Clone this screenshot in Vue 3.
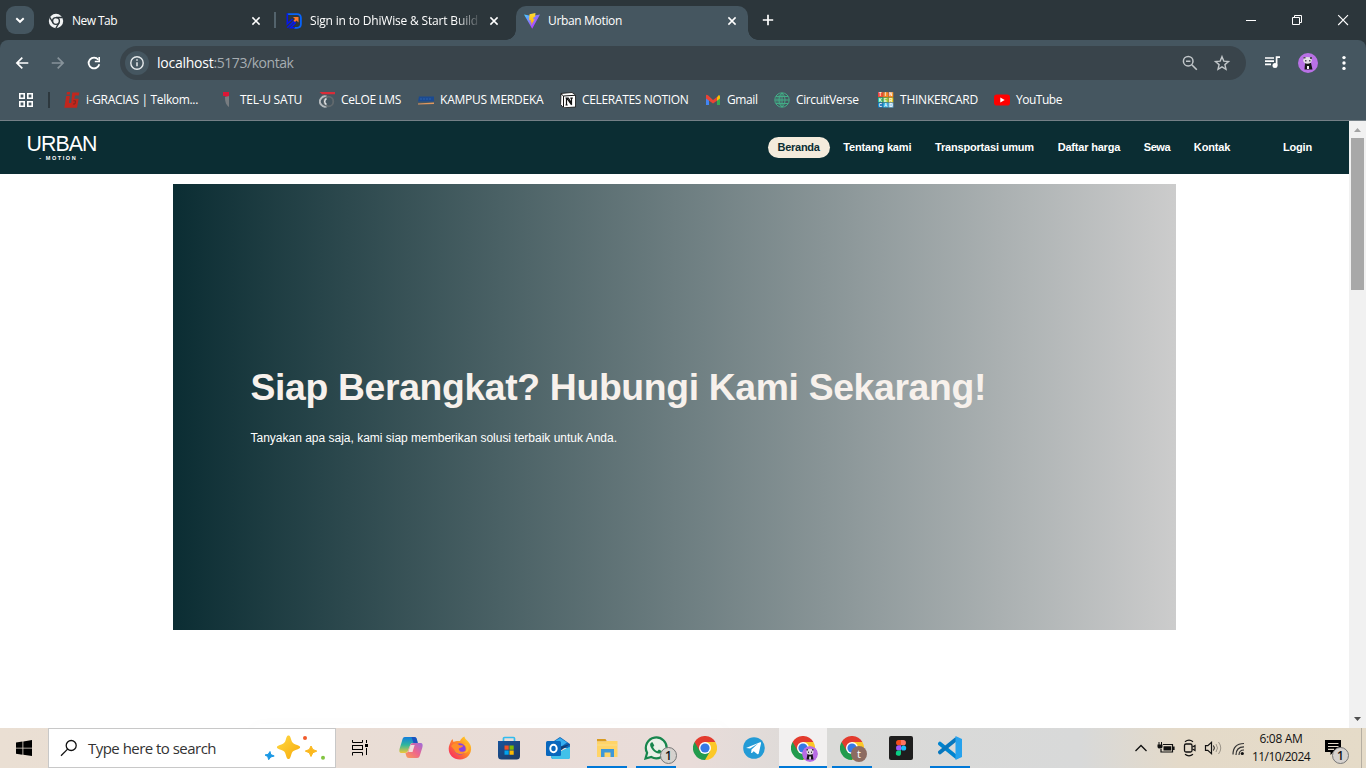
<script setup>
const fit = (el, binding) => {
  el.style.letterSpacing = '0px'
  const n = el.textContent.trim().length
  const w = el.getBoundingClientRect().width
  el.style.letterSpacing = (binding.value - w) / n + 'px'
}
const vFit = { mounted: fit }

const tabs = [
  { id: 'chrome', title: 'New Tab', w: 45 },
  { id: 'dhi', title: 'Sign in to DhiWise & Start Build', w: 168 },
  { id: 'vite', title: 'Urban Motion', w: 74, active: true },
]
const bookmarks = [
  { id: 'ig', text: 'i-GRACIAS | Telkom...', w: 112, slot: 154 },
  { id: 'tel', text: 'TEL-U SATU', w: 62, slot: 101 },
  { id: 'celoe', text: 'CeLOE LMS', w: 60, slot: 99 },
  { id: 'kampus', text: 'KAMPUS MERDEKA', w: 103.5, slot: 142 },
  { id: 'notion', text: 'CELERATES NOTION', w: 106.5, slot: 145 },
  { id: 'gmail', text: 'Gmail', w: 30.5, slot: 69 },
  { id: 'cv', text: 'CircuitVerse', w: 62.5, slot: 104 },
  { id: 'tinker', text: 'THINKERCARD', w: 78, slot: 116 },
  { id: 'yt', text: 'YouTube', w: 46, slot: 90 },
]
const links = [
  ['Beranda', 42], ['Tentang kami', 68], ['Transportasi umum', 99],
  ['Daftar harga', 62.5], ['Sewa', 26.3], ['Kontak', 36.5],
]
const apps = ['copilot', 'firefox', 'store', 'outlook', 'files', 'whatsapp', 'chrome', 'telegram', 'chromeA', 'chromeT', 'figma', 'code']
const running = ['files', 'whatsapp', 'chromeA', 'chromeT', 'code']
const tinker = ['#f04b37', '#f58220', '#f58220', '#22b573', '#8cc63f', '#e0c318', '#1479bf', '#29abe2', '#7ac5ee']
const tinkerLetters = 'TINKERCAD'.split('')
</script>

<template>
  <div class="screen">
    <header class="strip">
      <div class="tabsearch">
        <svg width="28" height="28" viewBox="0 0 28 28"><path d="M10.3 12.2 14 15.8l3.7-3.6" fill="none" stroke="#fff" stroke-width="1.9" /></svg>
      </div>
      <div v-for="t in tabs" :key="t.id" class="tab" :class="[{ active: t.active }, t.id]">
        <svg v-if="t.id === 'chrome'" class="fav" viewBox="0 0 16 16">
          <circle cx="8" cy="8" r="7.2" fill="#f1f3f4" />
          <circle cx="8" cy="8" r="3.4" fill="#f1f3f4" stroke="#2c363b" stroke-width="1.4" />
          <path d="M8 4.5h6.6M5 9.8 1.8 4.3M11 9.8l-3.2 5.5" stroke="#2c363b" stroke-width="1.3" />
        </svg>
        <svg v-else-if="t.id === 'dhi'" class="fav" viewBox="0 0 16 16">
          <path d="M1.500 1.200H11q3.900 0 3.900 3.900v6q0 3.700-3.900 3.700H8" fill="none" stroke="#0763fb" stroke-width="1.800" />
          <path d="M1.300.3v10.500L6.500 6M1.300 14.700 7.800 8.400l1.500 1.500-4.800 4.900H9" fill="none" stroke="#0718e8" stroke-width="1.600" />
          <path d="M7 4h5.500v5.500L10.500 7.600 9 9 7.500 7.500 9 6z" fill="#ff7629" />
        </svg>
        <svg v-else class="fav" viewBox="0 0 16 16">
          <defs>
            <linearGradient id="vg" x1="0" y1="0" x2="1" y2="1"><stop stop-color="#41d1ff" /><stop offset="0.8" stop-color="#bd34fe" /></linearGradient>
            <linearGradient id="vy" x1="0" y1="0" x2="0" y2="1"><stop stop-color="#ffdd35" /><stop offset="1" stop-color="#ffa800" /></linearGradient>
          </defs>
          <path d="M0 1.5 8 3l8-1.5L8.2 15.7z" fill="url(#vg)" />
          <path d="m11.5.1-6 1.2-.4 6 1.8-.4-.5 2.5 1.3-.4-.6 3.4 3.7-6.3-1.8.3.8-2.5 1.3-.2z" fill="url(#vy)" />
        </svg>
        <span class="title"><span v-fit="t.w" class="fit">{{ t.title }}</span></span>
        <svg class="close" viewBox="0 0 16 16"><path d="m4.4 4.400 7.200 7.200m0-7.200-7.200 7.200" stroke="#fff" stroke-width="1.500" /></svg>
      </div>
      <svg class="plus" width="16" height="16" viewBox="0 0 16 16"><path d="M8 2.800v10.400M2.800 8h10.400" stroke="#fff" stroke-width="1.700" /></svg>
      <div class="winctl">
        <svg viewBox="0 0 46 40"><path d="M18 20.500h10" stroke="#fff" /></svg>
        <svg viewBox="0 0 46 40"><path d="M18.500 17.500h7v7h-7zM20.500 17.500v-2h7v7h-2" fill="none" stroke="#fff" /></svg>
        <svg viewBox="0 0 46 40"><path d="m18.200 15.200 9.800 9.800m0-9.800L18.200 25" stroke="#fff" stroke-width="1.100" /></svg>
      </div>
    </header>

    <div class="toolbar">
      <div class="navbtns">
        <svg viewBox="0 0 36 40"><path d="M24.300 23H13m5.300-5.400L12.900 23l5.400 5.400" fill="none" stroke="#fff" stroke-width="1.700" /></svg>
        <svg viewBox="0 0 36 40"><path d="M11.700 23H23m-5.300-5.400 5.400 5.400-5.400 5.400" fill="none" stroke="#87939a" stroke-width="1.700" /></svg>
        <svg viewBox="0 0 36 40"><path d="M22.300 19.700A5.400 5.400 0 1 0 23.300 24.300" fill="none" stroke="#fff" stroke-width="1.800" /><path d="M24 17v5.200h-5.200v-1.500h3.600V17z" fill="#fff" /></svg>
      </div>
      <div class="omni">
        <div class="info">
          <svg width="24" height="24" viewBox="0 0 24 24"><circle cx="12" cy="12" r="6.200" fill="none" stroke="#e6eaec" stroke-width="1.400" /><path d="M12 11.200v4M12 8.300v1.500" stroke="#e6eaec" stroke-width="1.500" /></svg>
        </div>
        <span v-fit="56.5" class="fit host">localhost</span><span v-fit="80" class="fit path">:5173/kontak</span>
        <svg class="oi first" viewBox="0 0 18 18"><circle cx="7.200" cy="7.200" r="4.800" fill="none" stroke="#c1c6c9" stroke-width="1.500" /><path d="m10.800 10.800 5 5M5 7.200h4.400" stroke="#c1c6c9" stroke-width="1.600" /></svg>
        <svg class="oi" viewBox="0 0 18 18"><path d="m9 2.700 1.800 4.400 4.700.4-3.600 3.100 1.100 4.700L9 12.800l-4 2.500 1.100-4.700-3.600-3.100 4.700-.4z" fill="none" stroke="#c1c6c9" stroke-width="1.400" /></svg>
      </div>
      <svg class="tb music" viewBox="1 0 36 40"><path d="M12 18h9M12 21.200h9M12 24.400h6" stroke="#fff" stroke-width="1.700" /><circle cx="22" cy="25.500" r="2.500" fill="#fff" /><path d="M23.600 25.500v-8.300h3.400" fill="none" stroke="#fff" stroke-width="1.700" /></svg>
      <svg class="tb" viewBox="0 0 36 40"><circle cx="18" cy="23" r="10" fill="#b971e6" /><g transform="translate(18 23)"><path d="M-3 0h6l1.500 6.500h-8z" fill="#161616" /><ellipse cx="-.5" cy="-2.700" rx="4.200" ry="3.400" fill="#e3dfe5" /><path d="M-4.500-6h2v1.500h-2zM2-6h2v2H2zM-3-3h1.500v1.500H-3zM1-3h1.500v1.500H1z" fill="#55505a" /><path d="M-1 3h2v3h-2z" fill="#f2eef4" /></g></svg>
      <svg class="tb" viewBox="0 0 36 40"><circle cx="18" cy="17.600" r="1.700" fill="#fff" /><circle cx="18" cy="23" r="1.700" fill="#fff" /><circle cx="18" cy="28.400" r="1.700" fill="#fff" /></svg>
    </div>

    <div class="bookmarks">
      <svg class="grid" width="16" height="16" viewBox="0 0 16 16"><path d="M1.800 1.800h4.400v4.400H1.800zM9.800 1.800h4.400v4.400H9.800zM1.800 9.800h4.400v4.400H1.800zM9.800 9.800h4.400v4.400H9.800z" fill="none" stroke="#fff" stroke-width="1.600" /></svg>
      <div class="bar"></div>
      <div v-for="b in bookmarks" :key="b.id" class="bm" :style="{ width: b.slot + 'px' }">
        <svg v-if="b.id === 'ig'" viewBox="0 0 16 16"><path d="M3 0h3.200l-.5 2.600H2.500zM2.200 4h3.600L4.900 11h2.300L8.300.5h7L14.800 3.500H11l-.7 3.200h4.400L13 15.700H.3L1 11.500z" fill="#c2261d" /><path d="M9.300 8.800h2.200l-.5 3.200H9" fill="none" stroke="#7e2521" /></svg>
        <svg v-else-if="b.id === 'tel'" viewBox="0 0 16 16"><path d="M5 0h6v4.500L9 6 7 4 5 4z" fill="#dc1535" /><path d="m7 5 4-1v11c-3-2-4-5-4-10z" fill="#777c80" /></svg>
        <svg v-else-if="b.id === 'celoe'" viewBox="0 0 16 16"><path d="M.5 0H16v2.300H3z" fill="#d92c38" /><path d="M8.500 5.200a5 5 0 1 0 0 8.600" fill="none" stroke="#b6bbbe" stroke-width="2" /><circle cx="9.500" cy="9.500" r="4.800" fill="none" stroke="#61696d" stroke-width="1.800" /><path d="M7.500 6.500a3.400 3.400 0 0 0 0 6" fill="none" stroke="#e2e4e5" stroke-width="1.500" /></svg>
        <svg v-else-if="b.id === 'kampus'" viewBox="0 0 16 16"><path d="M1 4.500h15v5H0z" fill="#1b4a91" /><path d="M2 7h12" stroke="#2d62ab" stroke-dasharray="2 1" /><path d="m0 11.500 16-1V12L0 12.500z" fill="#e0975f" /></svg>
        <svg v-else-if="b.id === 'notion'" viewBox="0 0 16 16"><path d="M1 1.500 12 .5l3.500 2.500v12l-12 .8L.6 12.500z" fill="#fff" stroke="#111" stroke-width=".8" /><path d="M3.500 4 15 3.300M3.500 4v11M1 1.800 3.500 4" stroke="#111" fill="none" /><path d="M5.500 6h2.800l3.200 5V6.300M6.500 6v7M5.500 13h2.200M10.300 6.200h2.500M7 6.500l4.600 6.400" stroke="#111" stroke-width="1.200" fill="none" /></svg>
        <svg v-else-if="b.id === 'gmail'" viewBox="0 0 16 16"><path d="M1 4.500v8.500h3V6z" fill="#4285f4" /><path d="M15 4.500v8.500h-3V6z" fill="#34a853" /><path d="M1 3.500v3l7 5 4-2.800V5L8 8 3 3.200C2 2.500 1 2.500 1 3.500z" fill="#ea4335" /><path d="M12 5.500 13.200 3.500Q15 2.500 15 4.500v2l-3 2.300z" fill="#fbbc04" /></svg>
        <svg v-else-if="b.id === 'cv'" viewBox="0 0 16 16"><circle cx="8" cy="8" r="7.200" fill="none" stroke="#42ad86" stroke-width="1" /><path d="M8 1v14M1 8h14M2 4.500h12M2 11.500h12M8 1c-4 3-4 11 0 14M8 1c4 3 4 11 0 14" fill="none" stroke="#42ad86" stroke-width="1" /><path d="M7 2C3 3 1 6 2 11l5 3z" fill="#42ad86" opacity=".35" /></svg>
        <svg v-else-if="b.id === 'tinker'" viewBox="0 0 16 16">
          <g v-for="(c, i) in tinker" :key="i"><rect :x="(i % 3) * 5.2" :y="0.2 + Math.floor(i / 3) * 5.2" width="4.900" height="4.900" :fill="c" /><text :x="2.400 + (i % 3) * 5.2" :y="4.300 + Math.floor(i / 3) * 5.2" text-anchor="middle" class="tk">{{ tinkerLetters[i] }}</text></g>
        </svg>
        <svg v-else viewBox="0 0 16 16"><rect y="2.500" width="16" height="11" rx="2.800" fill="#f00" /><path d="m6.300 5.600 4.400 2.400-4.400 2.400z" fill="#fff" /></svg>
        <span v-fit="b.w" class="fit">{{ b.text }}</span>
      </div>
    </div>

    <main class="view">
      <div class="page">
        <nav class="nav">
          <div class="logo"><span v-fit="70" class="fit urban">URBAN</span><span v-fit="44.5" class="fit motion">- MOTION -</span></div>
          <div class="links">
            <a v-for="(l, i) in links" :key="l[0]" :class="{ on: i === 0 }"><span v-fit="l[1]" class="fit">{{ l[0] }}</span></a>
          </div>
          <a class="login"><span v-fit="29" class="fit">Login</span></a>
        </nav>
        <section class="hero">
          <h1><span v-fit="735.5" class="fit">Siap Berangkat? Hubungi Kami Sekarang!</span></h1>
          <p><span v-fit="366.5" class="fit">Tanyakan apa saja, kami siap memberikan solusi terbaik untuk Anda.</span></p>
        </section>
        <div class="card"></div>
      </div>
      <aside class="scroll">
        <svg width="17" height="17" viewBox="0 0 17 17"><path d="M5 11h7L8.500 7z" fill="#a3a3a3" /></svg>
        <div class="thumb"></div>
        <svg class="down" width="17" height="17" viewBox="0 0 17 17"><path d="M5 6h7l-3.500 4z" fill="#505050" /></svg>
      </aside>
    </main>

    <footer class="taskbar">
      <svg class="start" viewBox="0 0 48 40"><path d="m16 14.500 6.500-1v6.200H16zM23.300 13.400 32 12v7.700h-8.700zM16 20.500h6.500v6.300l-6.500-1zM23.300 20.500H32V28l-8.700-1.300z" /></svg>
      <div class="search">
        <svg width="20" height="20" viewBox="0 0 20 20"><circle cx="12.200" cy="7.500" r="5" fill="none" stroke="#111" stroke-width="1.300" /><path d="m8.600 11.100-6.600 6.600" stroke="#111" stroke-width="1.300" /></svg>
        <span v-fit="128" class="fit">Type here to search</span>
        <svg class="spark" width="64" height="30" viewBox="0 0 64 30">
          <defs><linearGradient id="sg" x1="0" y1="0" x2="1" y2="1"><stop stop-color="#ffda45" /><stop offset="1" stop-color="#f7a909" /></linearGradient></defs>
          <path d="M24.500 2.500c1.500 0 1.700 1 2.800 4.500.8 2.700 1.700 3.300 4.300 4.400 3.500 1.400 4.500 1.700 4.500 2.800s-1 1.500-4.500 2.800c-2.600 1-3.500 1.700-4.300 4.500-1.100 3.500-1.300 4.500-2.800 4.500s-1.700-1-2.800-4.500c-.8-2.800-1.700-3.500-4.300-4.500-3.500-1.300-4.500-1.700-4.500-2.800s1-1.400 4.500-2.800c2.600-1.100 3.500-1.700 4.300-4.400C22.800 3.500 23 2.500 24.500 2.500z" fill="url(#sg)" />
          <path d="m47 13 1.800 3.500 4 1.600-4 1.700L47 23.500l-1.700-3.700-4-1.700 4-1.600z" fill="#fbb81d" stroke="#fbb81d" stroke-linejoin="round" />
          <path d="m6 18.500.7 3 3.500 1.500-3.500 1 -2 2.700-1-3.200-2.700-1.500 3.200-.7z" fill="#1a98e5" stroke="#1a98e5" stroke-linejoin="round" />
          <circle cx="41" cy="5" r="2" fill="#f15b2c" /><circle cx="59" cy="24.800" r="2" fill="#83c441" />
        </svg>
      </div>
      <svg class="task" viewBox="-4 0 48 40"><path d="M12.500 12v2.500h10V12M12.500 27.500v-3h10v3M12.500 17v5M22.500 17v5M12 17.500h11M12 21.500h11" fill="none" stroke="#000" /><path d="M26.500 12v3M26.500 20v7" stroke="#000" /><rect x="25" y="16" width="3" height="3" /></svg>
      <div class="apps">
        <div v-for="a in apps" :key="a" class="app" :class="[{ run: running.includes(a), current: a === 'chromeA' }]">
          <svg v-if="a === 'copilot'" viewBox="0 0 24 24">
            <defs><linearGradient id="ca" x1="0" y1="0" x2="0" y2="1"><stop stop-color="#127ddd" /><stop offset=".5" stop-color="#30b79c" /><stop offset="1" stop-color="#f1c737" /></linearGradient><linearGradient id="cb" x1="1" y1="0" x2="0" y2="1"><stop stop-color="#9c6cdd" /><stop offset=".5" stop-color="#ee668c" /><stop offset="1" stop-color="#fa9d53" /></linearGradient></defs>
            <path d="M6 1h9c2 0 2.500 1 3 3l.8 3H14c-2 0-2.600 1-3.200 3l-1.600 4c-.6 2-1.200 3-3.200 3H3c-3 0-3-2-2.200-5L3 5c.7-2.500 1-4 3-4z" fill="url(#ca)" />
            <path d="M15 1c2 0 2.500 1 3 3l.7 3h-4.200L12.500 1z" fill="#1c53bf" />
            <path d="M18 22H10c-2 0-2.500-1-3-3l-.5-2c2 0 2.500-1 3-3l1.500-4c.6-2 1.200-3 3.200-3H21c3 0 3 2 2.200 5L21 19c-.6 2-1 3-3 3z" fill="url(#cb)" />
            <path d="m11.500 9-2.200 7h4.200l2.200-7z" fill="#f0dfdc" />
          </svg>
          <svg v-else-if="a === 'firefox'" viewBox="0 0 24 24">
            <defs><linearGradient id="ff" x1="1" y1="0" x2="0" y2="1"><stop stop-color="#ffe329" /><stop offset=".45" stop-color="#ff8a26" /><stop offset="1" stop-color="#f8186d" /></linearGradient></defs>
            <path d="M3 5 4.500 3l1 3C8 4.500 11 5 12 5c1-2 2-3.500 4.500-4.500 0 3 5.500 5 6.500 10.500C24 18 18.500 23.500 12 23.500S.5 19 .7 12.500C.8 9.500 2 8 3 5z" fill="url(#ff)" />
            <circle cx="12" cy="13" r="5.700" fill="#8844df" /><path d="M3 10c3-3.500 6-3 8.500-.7l3.700.2c-.2 2-3.700 2-4.500 3.500 1 4 5 3 7 1.500-1.200 5-10 5-11.700-1z" fill="#ff8e2a" /><path d="M16 8c4 3 3 8-1 9 5 1 8-5 4-9z" fill="#ffb72b" />
          </svg>
          <svg v-else-if="a === 'store'" viewBox="0 0 24 24"><defs><linearGradient id="st" x1="0" y1="0" x2="1" y2="1"><stop stop-color="#16539c" /><stop offset="1" stop-color="#203a61" /></linearGradient></defs><path d="M6.500 6V2.500q0-1 1-1h9q1 0 1 1V6" fill="none" stroke="#31bcef" stroke-width="1.700" /><path d="M1 5h22v15q0 3.500-3.500 3.500h-15Q1 23.500 1 20z" fill="url(#st)" /><path d="M7.500 9.500h4.200v4.200H7.500z" fill="#f25022" /><path d="M12.500 9.500h4.200v4.200h-4.200z" fill="#7fba00" /><path d="M7.500 14.500h4.200v4.200H7.500z" fill="#00a4ef" /><path d="M12.500 14.500h4.200v4.200h-4.200z" fill="#ffb900" /></svg>
          <svg v-else-if="a === 'outlook'" viewBox="0 0 24 24"><path d="M5 7 14 1l10 7v4H5z" fill="#1065b7" /><path d="m9 5 5-3 7 4.500L13 12z" fill="#35aef0" /><path d="m13 11 11-3-10 7z" fill="#123f75" /><path d="M5 11 14 16l10-5.500V21q0 2-2 2H7q-2 0-2-2z" fill="#28a8ea" /><path d="m5 20 19-9v10q0 2-2 2H7z" fill="#42c1e9" /><rect x="0" y="5" width="15" height="15" rx="1.500" fill="#0967bd" /><ellipse cx="7.500" cy="12.500" rx="3.200" ry="3.700" fill="none" stroke="#fff" stroke-width="2" /></svg>
          <svg v-else-if="a === 'files'" viewBox="0 0 24 24"><path d="M2 3h8.500l1.500 2.500H2z" fill="#d99b20" /><path d="M2 5.500h8.500L12 5h10.500v16H2z" fill="#ffd468" /><path d="M6 13h13v8h-3.500v-4.500h-6V21H6z" fill="#3e98d9" /><path d="M2 8h20.500v2H2z" fill="#fadc88" opacity=".6" /></svg>
          <svg v-else-if="a === 'whatsapp'" viewBox="0 0 24 24"><path d="m1.500 22.500 1.600-5.700A10.400 10.400 0 1 1 7.300 21z" fill="#eaf0e8" stroke="#17864d" stroke-width="2.200" /><path d="M8.500 6.300c-1-.4-2.300.8-2.400 2.200-.1 3.500 4.500 8.700 8.700 9 1.800 0 3-1.200 2.900-2.600l-2.800-1.400-1.600 1.700c-2-.9-3.500-2.300-4.200-4.200l1.200-1.500z" fill="#17864d" /></svg>
          <svg v-else-if="a.startsWith('chrome')" viewBox="0 0 24 24"><path d="M12 12V6h10.400A12 12 0 0 1 12 24z" fill="#fcc827" /><path d="M1.600 6A12 12 0 0 0 12 24l5.200-9H12z" fill="#229b4d" /><path d="M12 6h10.400A12 12 0 0 0 1.600 6l5.200 9L12 12z" fill="#e33b2e" /><circle cx="12" cy="12" r="6" fill="#fff" /><circle cx="12" cy="12" r="4.600" fill="#3679e5" /></svg>
          <svg v-else-if="a === 'telegram'" viewBox="0 0 24 24"><circle cx="12" cy="12" r="10.800" fill="#239bd6" /><path d="m4 12 14-5.700c1-.2 1.200.2 1 1.200l-2.200 9.700c-.3 1.200-.9 1.100-1.700.7l-3.400-2.600-1.700 1.700-.9.100.4-3.700 6.500-6-7.900 5z" fill="#fff" /></svg>
          <svg v-else-if="a === 'figma'" viewBox="0 0 24 24"><rect width="24" height="24" rx="2" fill="#1e1e1e" /><path d="M12 4H9.700a2.600 2.600 0 0 0 0 5.300H12z" fill="#f24e1e" /><path d="M12 4h2.300a2.600 2.600 0 0 1 0 5.300H12z" fill="#ff7262" /><path d="M12 9.300H9.700a2.600 2.600 0 0 0 0 5.300H12z" fill="#a259ff" /><circle cx="14.600" cy="12" r="2.600" fill="#1abcfe" /><path d="M12 14.600H9.700a2.600 2.600 0 1 0 2.300 2.600z" fill="#0acf83" /></svg>
          <svg v-else viewBox="0 0 24 24"><path d="m2 7.700 16 13" stroke="#0084cf" stroke-width="4" stroke-linecap="round" /><path d="m2 16.300 16-13" stroke="#0877bd" stroke-width="4" stroke-linecap="round" /><path d="M17.500 0 24 3v18l-6.500 3z" fill="#26a2ed" /></svg>
          <span v-if="a === 'whatsapp'" class="badge num">1</span>
          <span v-if="a === 'chromeT'" class="badge tee">t</span>
          <svg v-if="a === 'chromeA'" class="badge" viewBox="0 0 16 16"><circle cx="8" cy="8" r="8" fill="#b76be4" /><path d="M5.500 8h5l1 5.500h-7z" fill="#17131a" /><ellipse cx="8" cy="5.800" rx="3.500" ry="3" fill="#ded8e2" /><path d="M4.500 3H6v1.500H4.500zM10 3h1.500v1.500H10zM6 5.500h1V7H6zM9 5.500h1V7H9z" fill="#443c49" /><path d="M7.300 10.500h1.500v3H7.300z" fill="#fff" /></svg>
        </div>
      </div>
      <div class="tray">
        <svg viewBox="0 0 120 40" width="120" height="40">
          <path d="m5.500 23 5.500-5.500 5.500 5.500" fill="none" stroke="#111" stroke-width="1.300" />
          <path d="M33 16.500h9.500v7.500H31v-3" fill="none" stroke="#111" stroke-width="1.200" /><path d="M33.500 18.200h7.700v4.300h-7.700zM43 18.500h1.600v3.500H43zM27.500 16.500h5V19q0 1.500-2.500 1.500T27.500 19zM28.500 14h1v2.500h-1zM31 14h1v2.500h-1z" fill="#111" />
          <rect x="54.500" y="16" width="7.500" height="8" rx="1.500" fill="none" stroke="#111" stroke-width="1.300" /><path d="m62.500 19 2.500-1.500v5L62.500 21M55 13.700q4-3 8 0M55 26.300q4 3 8 0" fill="none" stroke="#111" stroke-width="1.200" />
          <path d="M75.500 17.700h2.300l3.700-3.300v11.200l-3.700-3.300h-2.300z" fill="none" stroke="#111" stroke-width="1.200" /><path d="M83.500 17.500q1.700 2.500 0 5" fill="none" stroke="#111" /><path d="M86 16q3 4 0 8M88.500 14q4.500 6 0 12" fill="none" stroke="#9b9488" />
          <circle cx="112.300" cy="25.500" r="1.600" fill="#111" /><path d="M109 27q0-5 5-5M106 27q0-8.200 8-8.200M103 26.500q0-11 11-11" fill="none" stroke="#333" stroke-width="1.200" />
        </svg>
      </div>
      <div class="clock"><span v-fit="43" class="fit">6:08 AM</span><span v-fit="58" class="fit">11/10/2024</span></div>
      <div class="notif">
        <svg width="20" height="20" viewBox="0 0 20 20"><path d="M0 2h16v12H8.500l-3 3v-3H0z" /><path d="M3 5.500h10.500M3 8.500h10.500M3 11.400h6" stroke="#e4dac9" stroke-width="1.200" /></svg>
        <span class="badge num">1</span>
      </div>
      <div class="desk"></div>
    </footer>
  </div>
</template>

<style>
html, body { margin: 0; overflow: hidden; }
</style>

<style scoped>
* { box-sizing: border-box; }
.screen { width: 1366px; height: 768px; display: flex; flex-direction: column; overflow: hidden; font-family: "Open Sans", "Noto Sans", sans-serif; font-size: 12px; color: #fff; background: #2c363b; }
svg { display: block; flex: none; }
.fit { display: inline-block; white-space: nowrap; }
.strip { height: 40px; flex: none; display: flex; background: #2c363b; }
.tabsearch { width: 28px; height: 28px; margin: 6px 6px 0; border-radius: 9px; background: #455660; flex: none; }
.tab { width: 238px; height: 34px; margin-top: 6px; padding-left: 8px; display: flex; align-items: center; position: relative; flex: none; padding-bottom: 5px; }
.tab.chrome::after { content: ""; position: absolute; left: 234px; top: 6px; width: 2px; height: 16px; background: #53636c; }
.tab.active { width: 232px; background: #455660; border-radius: 10px 10px 0 0; }
.tab.active::before, .tab.active::after { content: ""; position: absolute; bottom: 0; width: 10px; height: 10px; }
.tab.active::before { left: -10px; background: radial-gradient(circle at 0 0, transparent 9.5px, #455660 10px); }
.tab.active::after { right: -10px; background: radial-gradient(circle at 100% 0, transparent 9.5px, #455660 10px); }
.fav { width: 16px; height: 16px; }
.title { width: 170px; flex: none; margin-left: 8px; line-height: 18px; }
.tab.dhi .title { -webkit-mask-image: linear-gradient(90deg, #000 145px, transparent 172px); mask-image: linear-gradient(90deg, #000 145px, transparent 172px); }
.close { width: 16px; height: 16px; margin-left: 6px; }
.plus { margin: 12px 0 0 12px; }
.winctl { margin-left: auto; display: flex; }
.winctl svg { width: 46px; height: 40px; }
.toolbar { height: 40px; flex: none; display: flex; background: #455660; padding-left: 4px; border-radius: 8px 8px 0 0; }
.navbtns { display: flex; width: 116px; }
.navbtns svg, .tb { width: 36px; height: 40px; }
.omni { width: 1126px; height: 34px; margin-top: 6px; border-radius: 17px; background: #39444b; display: flex; align-items: center; padding: 0 15px 0 5px; font-size: 14px; flex: none; }
.omni .fit { padding-bottom: 1px; }
.info { width: 24px; height: 24px; border-radius: 50%; background: #455660; margin-right: 8px; }
.path { color: #a6adb1; }
.oi { width: 18px; height: 18px; margin-left: 14px; }
.oi.first { margin-left: auto; }
.music { margin-left: 8px; }
.bookmarks { height: 41px; flex: none; display: flex; align-items: center; background: #455660; border-bottom: 1px solid #758087; padding-left: 18px; }
.bar { width: 2px; height: 16px; background: #2d383e; margin: 0 14px; }
.bm { display: flex; align-items: center; gap: 6px; flex: none; }
.bm .fit { padding-bottom: 1px; }
.bm svg { width: 16px; height: 16px; }
.tk { font: bold 4.500px "Liberation Sans", sans-serif; fill: #fff; }
.view { height: 607px; flex: none; display: flex; background: #fff; font-family: "Liberation Sans", Arial, sans-serif; }
.page { width: 1349px; overflow: hidden; }
.nav { height: 53px; background: #0b2d33; display: flex; align-items: center; padding: 0 37px 0 26.5px; font-size: 11px; font-weight: bold; }
.logo { display: flex; flex-direction: column; width: 70px; font-weight: normal; align-items: center; padding-bottom: 1px; }
.urban { font-size: 21.3px; line-height: 22px; }
.motion { font-size: 5.5px; line-height: 6px; font-weight: bold; }
.links { display: flex; gap: 3.7px; margin-left: auto; }
.links a { height: 21px; line-height: 21px; padding: 0 10px; border-radius: 11px; }
.links a.on { background: #f4ebdc; color: #0b2d33; }
.login { margin-left: 42.7px; padding-bottom: 1px; }
.hero { width: 1003px; height: 446px; margin: 10px 0 0 173px; padding: 180px 0 0 77.500px; background: linear-gradient(90deg, #0b2d33, #ccc); }
.hero h1 { margin: 0; font-size: 37.3px; line-height: 46px; color: #f7f1ec; }
.hero p { margin: 20px 0 0; font-size: 12px; line-height: 16px; }
.card { width: 477px; height: 60px; margin: 94px 0 0 250px; border-radius: 12px; box-shadow: 0 0 14px rgba(0, 0, 0, .02); }
.scroll { width: 17px; background: #f1f1f1; display: flex; flex-direction: column; align-items: center; }
.thumb { width: 13px; height: 152px; background: #a8a8a8; }
.down { margin-top: auto; }
.taskbar { height: 40px; flex: none; display: flex; color: #111; background: linear-gradient(90deg, #eadfd3 0, #e9ddd5 350px, #e9dcd9 690px, #dadad8 830px, #d8d9d9 1080px, #e4dac9 1180px, #e5dbc8 1366px); }
.start, .task { width: 48px; height: 40px; }
.search { width: 288px; height: 40px; flex: none; background: #fff; border: 1px solid #c8c8c8; display: flex; align-items: center; padding: 0 7px 0 10px; font-size: 15px; color: #333; }
.search .fit { margin-left: 9px; }
.spark { margin-left: auto; }
.apps { display: flex; gap: 1px; margin-left: 3px; flex: none; }
.app { width: 48px; height: 40px; padding: 8px 12px; position: relative; }
.app > svg:first-child { width: 24px; height: 24px; }
.app.run::after { content: ""; position: absolute; left: 4px; right: 4px; bottom: 0; height: 2px; background: #0078d7; }
.app.current { background: #f2f0f0; }
.app.current::after { left: 0; right: 0; }
.badge { position: absolute; left: 23px; top: 18px; width: 16px; height: 16px; border-radius: 50%; text-align: center; line-height: 15px; font-size: 11px; }
.num { left: 28px; top: 19px; width: 17px; height: 17px; border: 1px solid #777; background: #d6d2ce; font-weight: 600; font-size: 12px; }
.tee { background: #8c6b61; color: #fff; }
.tray { margin-left: 156px; width: 120px; flex: none; }
.clock { width: 62px; flex: none; display: flex; flex-direction: column; align-items: center; padding-top: 2px; line-height: 18px; font-size: 12px; }
.notif { width: 40px; height: 40px; flex: none; margin-left: 9px; padding: 10px 0 0 4px; position: relative; }
.notif .num { left: 11px; }
.desk { width: 1px; height: 40px; flex: none; background: #b5aea2; }
</style>
